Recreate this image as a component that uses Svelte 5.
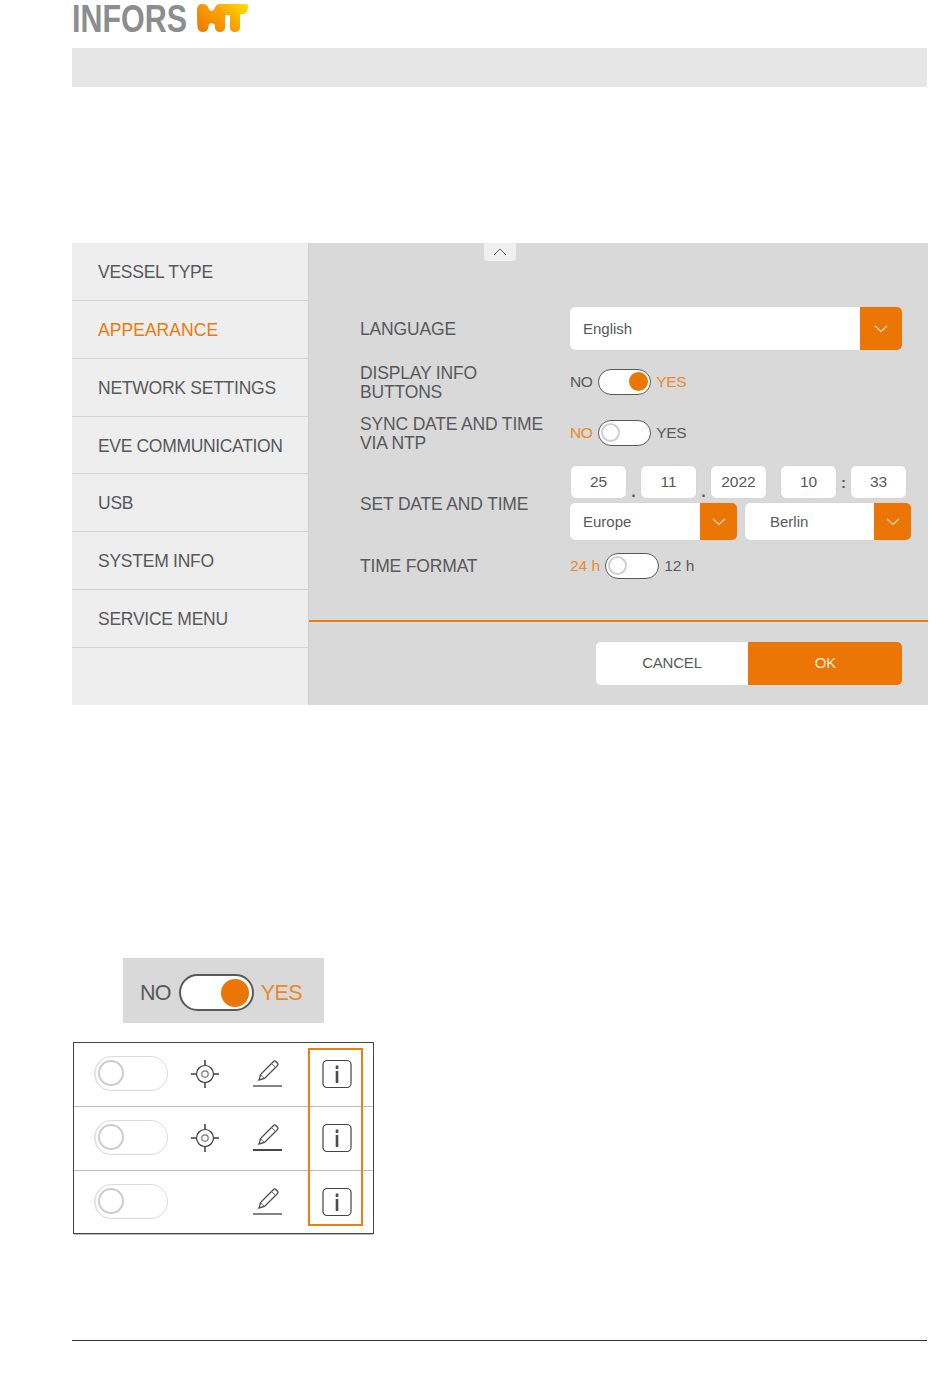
<script>
  const menu = ['VESSEL TYPE', 'APPEARANCE', 'NETWORK SETTINGS', 'EVE COMMUNICATION', 'USB', 'SYSTEM INFO', 'SERVICE MENU'];
  const rows = [{ target: true }, { target: true, heavy: true }, { target: false }];
</script>

{#snippet chevron()}
  <svg class="chev" width="14" height="8" viewBox="0 0 14 8"><path d="M1 1l6 5.500L13 1" fill="none" stroke="#fbdcbc" stroke-width="1.100"/></svg>
{/snippet}

<div class="page">
  <header class="logo">
    <span class="infors">INFORS</span>
    <svg class="ht" width="54" height="30" viewBox="0 0 54 30" aria-hidden="true">
      <defs>
        <linearGradient id="htg" x1="0" y1="0.8" x2="1" y2="0.2">
          <stop offset="0" stop-color="#f07c00"/>
          <stop offset="0.55" stop-color="#f9a200"/>
          <stop offset="1" stop-color="#ffd900"/>
        </linearGradient>
      </defs>
      <path fill="url(#htg)" d="M6.500 1C10 1 12 3 12.500 5C13 7 14.500 8 15.500 8C17 8 18 7 19 4.500C20 2 21.500 1 24 1H50C52 1 52.500 2.500 52 5C51.500 9 50 11 47 11H44V24C44 27.500 42 29 39 29C36 29 34 27.500 34 24V12H29V24C29 27.500 27 29 24 29C21 29 19 27.500 19 24V22.500C18 21 17 20 15.500 20C14 20 13 21 12.500 23V24C12 27.500 10 29 7 29C4 29 2 27.500 1.500 24C1 18 1 12 1 6.500C1 3 3.500 1 6.500 1Z"/>
    </svg>
  </header>
  <div class="band"></div>

  <section class="panel">
    <nav class="side">
      {#each menu as item, i}
        <div class="item" class:active={i === 1}>{item}</div>
      {/each}
    </nav>
    <div class="main">
      <div class="tab">
        <svg width="14" height="8" viewBox="0 0 14 8"><path d="M1 7l6-6 6 6" fill="none" stroke="#666" stroke-width="1"/></svg>
      </div>
      <div class="form">
        <div class="row r-lang">
          <div class="label">LANGUAGE</div>
          <div class="select wide"><span>English</span><b>{@render chevron()}</b></div>
        </div>
        <div class="row r-disp">
          <div class="label">DISPLAY INFO<br />BUTTONS</div>
          <div class="switch">
            <span>NO</span><i class="toggle on"><em></em></i><span class="hot">YES</span>
          </div>
        </div>
        <div class="row r-sync">
          <div class="label">SYNC DATE AND TIME<br />VIA NTP</div>
          <div class="switch">
            <span class="hot">NO</span><i class="toggle"><em></em></i><span>YES</span>
          </div>
        </div>
        <div class="row r-date">
          <div class="label">SET DATE AND TIME</div>
          <div class="dt">
            <div class="fields">
              <div class="f">25</div><u>.</u>
              <div class="f">11</div><u>.</u>
              <div class="f">2022</div>
              <div class="f h">10</div><s>:</s>
              <div class="f">33</div>
            </div>
            <div class="zones">
              <div class="select z1"><span>Europe</span><b>{@render chevron()}</b></div>
              <div class="select z2"><span>Berlin</span><b>{@render chevron()}</b></div>
            </div>
          </div>
        </div>
        <div class="row r-time">
          <div class="label">TIME FORMAT</div>
          <div class="switch tf">
            <span class="hot">24 h</span><i class="toggle"><em></em></i><span>12 h</span>
          </div>
        </div>
      </div>
      <div class="actions">
        <div class="cancel">CANCEL</div>
        <div class="ok">OK</div>
      </div>
    </div>
  </section>

  <div class="legend-wrap">
    <div class="big">
      <span>NO</span><i class="toggle on"><em></em></i><span class="hot">YES</span>
    </div>
  </div>

  <div class="table">
    {#each rows as r}
      <div class="trow">
        <i class="toggle ghost"><em></em></i>
        <div class="target">
          {#if r.target}
            <svg width="30" height="30" viewBox="0 0 30 30">
              <circle cx="15" cy="15" r="8.500" fill="none" stroke="#333" stroke-width="1.200"/>
              <circle cx="15" cy="15" r="3.200" fill="none" stroke="#777" stroke-width="1.200"/>
              <path d="M15 1v5M15 24v5M1 15h5.500M23.500 15h5.500" stroke="#6a6a6a" stroke-width="2"/>
            </svg>
          {/if}
        </div>
        <div class="pen">
          <svg width="30" height="30" viewBox="0 0 30 30">
            <path d="M6 21L7.500 15.500L20.500 2.500c.8-.8 1.500-.8 2.300 0l1.700 1.700c.8.8.8 1.500 0 2.300L11.500 19.500z" fill="none" stroke="#4a4a4a" stroke-width="1.300"/>
            <path d="M7.500 15.500l4 4M18.500 4.500l4 4" stroke="#777" stroke-width="1"/>
            <path d="M0 27h29" stroke="#333" stroke-width={r.heavy ? 1.800 : 1.200}/>
          </svg>
        </div>
        <div class="info">
          <svg width="30" height="30" viewBox="0 0 30 30">
            <rect x="1" y="1.500" width="28" height="27" rx="4" fill="none" stroke="#444" stroke-width="1.200"/>
            <rect x="13.700" y="6.500" width="2.600" height="3.500" fill="#4a4a4a"/>
            <rect x="13.700" y="12" width="2.600" height="12" fill="#4a4a4a"/>
          </svg>
        </div>
      </div>
    {/each}
    <div class="frame"></div>
  </div>

  <div class="rule"></div>
</div>

<style>
  :global(body) {
    margin: 0;
    background: #fff;
  }
  .page {
    width: 950px;
    height: 1387px;
    box-sizing: border-box;
    padding-left: 72px;
    font-family: "Liberation Sans", Arial, sans-serif;
    color: #58595b;
    overflow: hidden;
  }
  .logo {
    height: 48px;
    display: flex;
    align-items: flex-start;
  }
  .infors {
    display: block;
    flex: none;
    font-weight: 700;
    font-size: 39px;
    line-height: 28px;
    color: #8b8d8f;
    transform: scaleX(0.78);
    transform-origin: left top;
    margin-top: 5px;
    width: 150px;
    margin-right: -26px;
    white-space: nowrap;
  }
  .ht {
    margin: 3px 0 0 0;
  }
  .band {
    width: 855px;
    height: 39px;
    background: #e6e6e6;
  }
  .panel {
    margin-top: 156px;
    width: 856px;
    height: 462px;
    display: flex;
    background: #d9d9d9;
  }
  .side {
    width: 236px;
    flex: none;
    background: #eeeeee;
    border-right: 1px solid #cfcfcf;
  }
  .item {
    height: 57px;
    border-bottom: 1px solid #d2d2d2;
    padding-left: 26px;
    font-size: 17.500px;
    line-height: 58px;
    letter-spacing: -0.250px;
    white-space: nowrap;
  }
  .item:nth-child(4) {
    height: 56px;
    letter-spacing: -0.330px;
  }
  .active {
    color: #ec7a08;
    letter-spacing: 0.050px;
  }
  .main {
    flex: 1;
    position: relative;
    display: flex;
    flex-direction: column;
  }
  .tab {
    position: absolute;
    left: 175px;
    top: 0;
    width: 32px;
    height: 18px;
    background: #efefef;
    border-radius: 0 0 4px 4px;
    display: flex;
    align-items: center;
    justify-content: center;
  }
  .form {
    height: 379px;
    box-sizing: border-box;
    padding: 64px 0 0 51px;
    border-bottom: 2px solid #e67c1e;
  }
  .row {
    display: flex;
    align-items: center;
  }
  .label {
    width: 210px;
    flex: none;
    padding-top: 2px;
    font-size: 17.500px;
    line-height: 19px;
    letter-spacing: -0.170px;
  }
  .r-lang { height: 43px; }
  .r-disp { height: 40px; margin-top: 12px; }
  .r-sync { height: 40px; margin-top: 11px; }
  .r-date { margin-top: 13px; }
  .r-time { height: 26px; margin-top: 13px; }
  .r-time .label { padding-top: 0; }
  .select {
    display: flex;
    background: #fff;
    border-radius: 5px;
    overflow: hidden;
    box-shadow: 0 0 1px #bbb;
    font-size: 15px;
    align-items: stretch;
  }
  .select span {
    flex: 1;
    padding-left: 13px;
    display: flex;
    align-items: center;
  }
  .select b {
    background: #ec7605;
    display: flex;
    align-items: center;
    justify-content: center;
  }
  .wide { width: 332px; height: 43px; }
  .wide b { width: 42px; }
  .switch {
    display: flex;
    align-items: center;
    font-size: 15.500px;
    gap: 5px;
    letter-spacing: -0.450px;
  }
  .switch .toggle {
    margin-left: 1px;
  }
  .tf {
    letter-spacing: 0;
  }
  .switch.tf .toggle {
    width: 54px;
    margin-left: 0;
  }
  .hot { color: #e9892a; }
  .toggle {
    display: block;
    width: 53px;
    height: 26px;
    box-sizing: border-box;
    border: 1.500px solid #58595b;
    border-radius: 13px;
    background: #fff;
    position: relative;
    flex: none;
  }
  .toggle em {
    position: absolute;
    left: 2px;
    top: 2px;
    width: 19px;
    height: 19px;
    box-sizing: border-box;
    border-radius: 50%;
    border: 2px solid #cfcfcf;
    background: #fff;
  }
  .toggle.on em {
    left: auto;
    right: 2px;
    background: #ec7605;
    border-color: #ec7605;
  }
  .dt {
    display: flex;
    flex-direction: column;
    gap: 5px;
  }
  .fields {
    display: flex;
    align-items: center;
    height: 32px;
    margin-left: 1px;
  }
  .f {
    width: 55px;
    height: 32px;
    background: #fff;
    border-radius: 5px;
    box-shadow: 0 0 1px #bbb;
    font-size: 15.500px;
    line-height: 32px;
    text-align: center;
    flex: none;
  }
  .h { margin-left: 15px; }
  .fields u {
    width: 15px;
    text-align: center;
    text-decoration: none;
    font-weight: 700;
    font-size: 16px;
    align-self: flex-end;
    line-height: 18px;
    margin-bottom: -3px;
    flex: none;
  }
  .fields s {
    width: 15px;
    text-align: center;
    text-decoration: none;
    font-weight: 700;
    font-size: 15px;
    flex: none;
  }
  .zones {
    display: flex;
    gap: 8px;
  }
  .z1, .z2 { height: 37px; }
  .z1 { width: 167px; }
  .z2 { width: 166px; }
  .z1 b, .z2 b { width: 37px; }
  .z2 span { padding-left: 25px; }
  .actions {
    display: flex;
    margin: 20px 0 0 287px;
    width: 306px;
    height: 43px;
    font-size: 15px;
    line-height: 42px;
    text-align: center;
    border-radius: 5px;
    overflow: hidden;
    letter-spacing: -0.200px;
  }
  .cancel {
    width: 152px;
    background: #fff;
  }
  .ok {
    flex: 1;
    background: #ec7605;
    color: #fde9d2;
    padding-left: 1px;
  }
  .legend-wrap {
    margin: 253px 0 0 51px;
  }
  .big {
    width: 201px;
    height: 65px;
    background: #d9d9d9;
    display: flex;
    align-items: center;
    box-sizing: border-box;
    padding: 4px 0 0 17px;
    gap: 8px;
    font-size: 21.500px;
    letter-spacing: -0.700px;
  }
  .big span {
    padding-top: 2px;
  }
  .big .hot {
    margin-left: -1px;
  }
  .big .toggle {
    width: 75px;
    height: 37px;
    border-radius: 19px;
    border-width: 2px;
  }
  .big .toggle em {
    width: 28px;
    height: 28px;
    top: 2.500px;
    right: 2.500px;
  }
  .table {
    margin: 19px 0 0 1px;
    width: 301px;
    height: 192px;
    box-sizing: border-box;
    border: 1px solid #444;
    position: relative;
  }
  .trow {
    height: 64px;
    box-sizing: border-box;
    border-bottom: 1px solid #bdbdbd;
    padding-bottom: 2px;
    display: flex;
    align-items: center;
  }
  .trow:last-of-type { border-bottom: 0; padding-bottom: 0; height: 62px; }
  .toggle.ghost {
    width: 74px;
    height: 35px;
    border-radius: 18px;
    border: 1.500px solid #dadada;
    box-shadow: inset 2px 0 0 -1px #e4e4e4;
    margin-left: 20px;
  }
  .toggle.ghost em {
    width: 26px;
    height: 26px;
    left: 3px;
    top: 3px;
    border: 2.500px solid #cdcdcd;
  }
  .target {
    width: 30px;
    height: 30px;
    margin-left: 22px;
  }
  .pen {
    width: 30px;
    height: 30px;
    margin-left: 33px;
  }
  .info {
    width: 30px;
    height: 30px;
    margin-left: 39px;
  }
  .target svg, .pen svg, .info svg { display: block; }
  .frame {
    position: absolute;
    left: 234px;
    top: 5px;
    width: 55px;
    height: 178px;
    box-sizing: border-box;
    border: 2px solid #ec7f14;
  }
  .rule {
    margin-top: 106px;
    width: 855px;
    height: 1px;
    background: #333;
  }
</style>
